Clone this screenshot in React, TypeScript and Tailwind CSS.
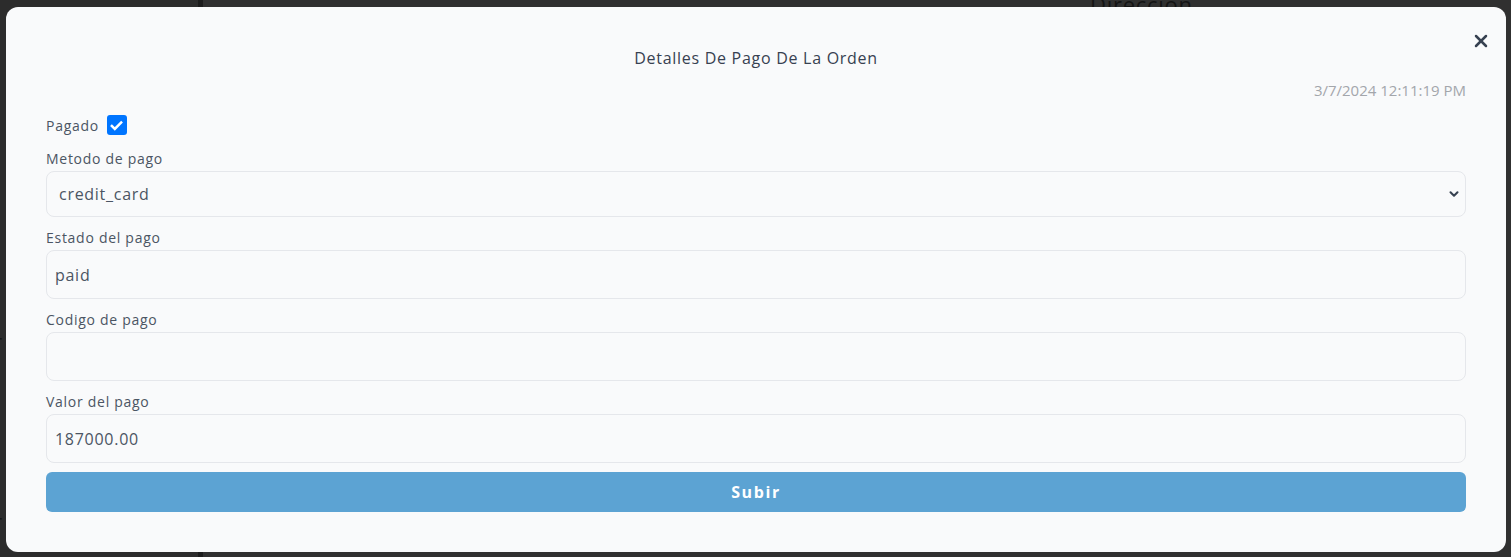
import { ChevronDown, X } from "lucide-react";

const font = { fontFamily: '"Open Sans", "Noto Sans", sans-serif' };

function Field({ label, value }: { label: string; value?: string }) {
  return (
    <div className="mt-[11px] flex flex-col">
      <label className="h-5 text-[14px] leading-5 font-medium text-[#4b5563]">{label}</label>
      <div className="mt-0.5 flex h-[49px] items-center rounded-lg border border-[#e5e7eb] bg-[#f9fafb] px-[8px] text-[16px] text-[#4b5563]">
        {value}
      </div>
    </div>
  );
}

export default function App() {
  return (
    <div className="relative h-[557px] w-full overflow-hidden bg-[#2f2f2f] tracking-[0.045em]" style={font}>
      {/* page behind the overlay */}
      <div className="flex h-full">
        <div className="flex w-[198px] flex-col justify-end bg-[#2c2c2c] pb-[20px] text-[20px] text-[#151515]">
          <span className="mb-[150px] -ml-[6px]">r</span>
          <span className="-ml-[6px]">r</span>
        </div>
        <div className="w-[5px] bg-[#1c1c1c]" />
        <div className="flex-1 bg-[#303030]">
          <div className="-mt-[12px] pl-[887px] text-[22px] text-[#141414]">Dirección</div>
        </div>
      </div>

      {/* modal */}
      <div className="absolute top-[7px] left-[6px] h-[545px] w-[1500px] rounded-xl bg-[#f9fafb] px-10 pt-[39px]">
        <button className="absolute top-[24px] right-[15px] text-[#374151]">
          <X size={20} strokeWidth={3} />
        </button>
        <h2 className="text-center text-[16px] leading-6 font-medium text-[#374151]">
          Detalles De Pago De La Orden
        </h2>
        <div className="mt-[9px] text-right text-[15px] leading-[22px] tracking-normal text-[#a3a6ab]">
          3/7/2024 12:11:19 PM
        </div>

        <div className="mt-[14px] flex h-5 items-center gap-2">
          <span className="text-[14px] font-medium text-[#4b5563]">Pagado</span>
          <span className="flex h-5 w-5 items-center justify-center rounded-[3px] bg-[#0075ff]">
            <svg viewBox="0 0 16 16" className="h-[15px] w-[15px]">
              <path d="M3 8.5l3.2 3.2L13 4.8" fill="none" stroke="white" strokeWidth="2.6" strokeLinecap="square" />
            </svg>
          </span>
        </div>

        <div className="mt-[14px] flex flex-col">
          <label className="h-5 text-[14px] leading-5 font-medium text-[#4b5563]">Metodo de pago</label>
          <div className="mt-0.5 flex h-[46px] items-center justify-between rounded-lg border border-[#e5e7eb] bg-[#f9fafb] pr-[4px] pl-[12px] text-[16px] text-[#4b5563]">
            <span>credit_card</span>
            <ChevronDown size={14} strokeWidth={3.5} className="text-[#374151]" />
          </div>
        </div>

        <Field label="Estado del pago" value="paid" />
        <Field label="Codigo de pago" />
        <Field label="Valor del pago" value="187000.00" />

        <button className="mt-[9px] h-10 w-full rounded-md bg-[#5ca3d3] text-[16px] font-bold tracking-[0.1em] text-white">
          Subir
        </button>
      </div>
    </div>
  );
}
